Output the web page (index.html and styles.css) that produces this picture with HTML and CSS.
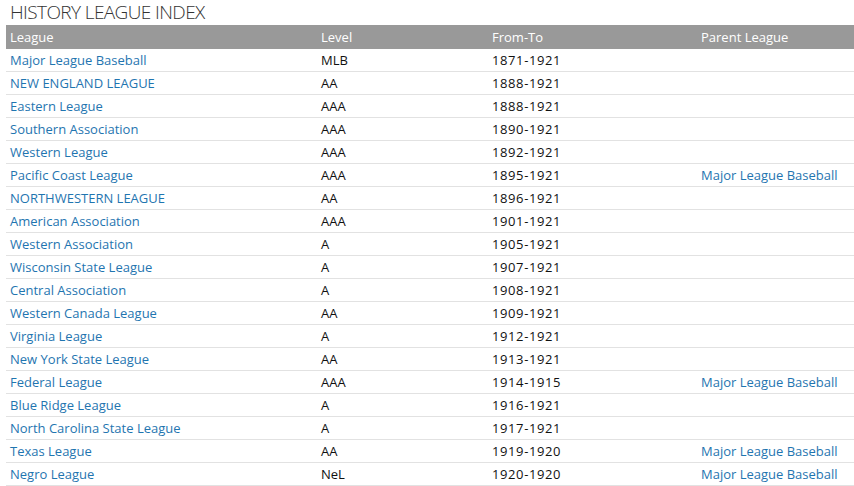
FILE: index.html
```html
<!DOCTYPE html>
<html>
<head>
<meta charset="utf-8">
<link rel="stylesheet" href="styles.css">
</head>
<body>
<h1 class="title">HISTORY LEAGUE INDEX</h1>
<table class="idx">
<thead>
<tr><th class="c1">League</th><th class="c2">Level</th><th class="c3">From-To</th><th class="c4">Parent League</th></tr>
</thead>
<tbody>
<tr><td><a href="#">Major League Baseball</a></td><td>MLB</td><td class="yr">1871-1921</td><td></td></tr>
<tr><td><a href="#">NEW ENGLAND LEAGUE</a></td><td>AA</td><td class="yr">1888-1921</td><td></td></tr>
<tr><td><a href="#">Eastern League</a></td><td>AAA</td><td class="yr">1888-1921</td><td></td></tr>
<tr><td><a href="#">Southern Association</a></td><td>AAA</td><td class="yr">1890-1921</td><td></td></tr>
<tr><td><a href="#">Western League</a></td><td>AAA</td><td class="yr">1892-1921</td><td></td></tr>
<tr><td><a href="#">Pacific Coast League</a></td><td>AAA</td><td class="yr">1895-1921</td><td><a href="#">Major League Baseball</a></td></tr>
<tr><td><a href="#">NORTHWESTERN LEAGUE</a></td><td>AA</td><td class="yr">1896-1921</td><td></td></tr>
<tr><td><a href="#">American Association</a></td><td>AAA</td><td class="yr">1901-1921</td><td></td></tr>
<tr><td><a href="#">Western Association</a></td><td>A</td><td class="yr">1905-1921</td><td></td></tr>
<tr><td><a href="#">Wisconsin State League</a></td><td>A</td><td class="yr">1907-1921</td><td></td></tr>
<tr><td><a href="#">Central Association</a></td><td>A</td><td class="yr">1908-1921</td><td></td></tr>
<tr><td><a href="#">Western Canada League</a></td><td>AA</td><td class="yr">1909-1921</td><td></td></tr>
<tr><td><a href="#">Virginia League</a></td><td>A</td><td class="yr">1912-1921</td><td></td></tr>
<tr><td><a href="#">New York State League</a></td><td>AA</td><td class="yr">1913-1921</td><td></td></tr>
<tr><td><a href="#">Federal League</a></td><td>AAA</td><td class="yr">1914-1915</td><td><a href="#">Major League Baseball</a></td></tr>
<tr><td><a href="#">Blue Ridge League</a></td><td>A</td><td class="yr">1916-1921</td><td></td></tr>
<tr><td><a href="#">North Carolina State League</a></td><td>A</td><td class="yr">1917-1921</td><td></td></tr>
<tr><td><a href="#">Texas League</a></td><td>AA</td><td class="yr">1919-1920</td><td><a href="#">Major League Baseball</a></td></tr>
<tr><td><a href="#">Negro League</a></td><td>NeL</td><td class="yr">1920-1920</td><td><a href="#">Major League Baseball</a></td></tr>
</tbody>
</table>
</body>
</html>
```
FILE: styles.css
```css
html, body {
  margin: 0;
  padding: 0;
  background: #fff;
}
body {
  font-family: "Open Sans", "Noto Sans", sans-serif;
  font-size: 13px;
  color: #111;
  padding: 0 0 0 6px;
}
.title {
  margin: 0;
  padding: 0 0 0 4px;
  font-family: "Open Sans", sans-serif;
  font-weight: 300;
  font-size: 19px;
  line-height: 25px;
  color: #333;
  letter-spacing: -0.6px;
}
.idx {
  border-collapse: collapse;
  width: 848px;
}
.idx th {
  background: #999;
  color: #fff;
  font-weight: normal;
  text-align: left;
  height: 24px;
  padding: 0 4px;
  line-height: 24px;
}
.idx td {
  height: 22px;
  padding: 0 4px;
  line-height: 22px;
  border-bottom: 1px solid #e2e2e2;
  white-space: nowrap;
}
.idx td.yr {
  letter-spacing: 0.6px;
}
.c1 { width: 303px; }
.c2 { width: 163px; }
.c3 { width: 201px; }
.idx a {
  color: #1f75b0;
  text-decoration: none;
}
```
